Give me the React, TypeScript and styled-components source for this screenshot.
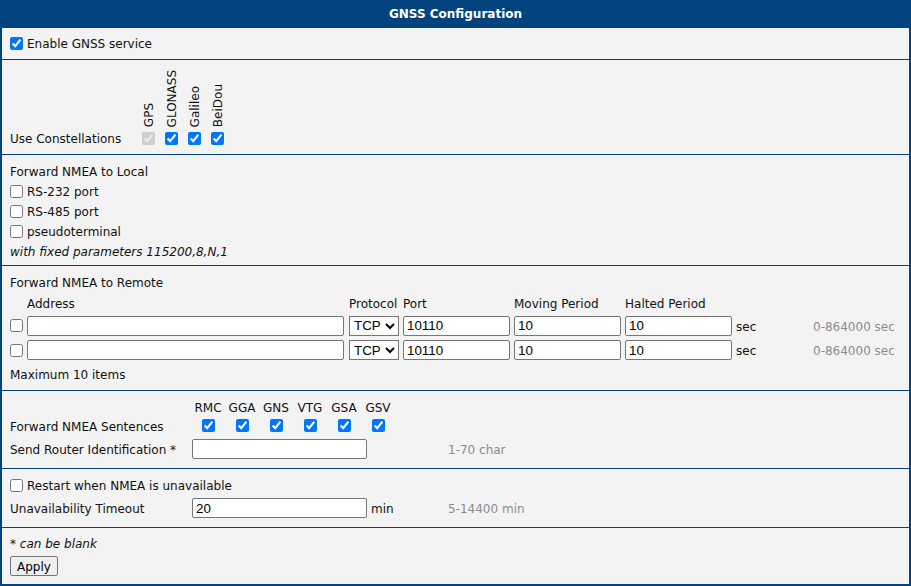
import React from "react";
import styled, { createGlobalStyle } from "styled-components";

const NAVY = "#01437c";
const HINT = "#8c8c8c";

const GlobalStyle = createGlobalStyle`
  html, body {
    margin: 0;
    padding: 0;
    background: #f3f3f3;
  }
  body {
    font-family: "DejaVu Sans", Verdana, sans-serif;
    font-size: 12px;
    color: #111;
  }
`;

const Panel = styled.div`
  width: 911px;
  box-sizing: border-box;
  border: 2px solid ${NAVY};
  border-top: 0;
  background: #f3f3f3;
`;

const Title = styled.div`
  height: 28px;
  line-height: 29px;
  margin: 0 -2px;
  background: ${NAVY};
  color: #fff;
  font-weight: bold;
  text-align: center;
`;

const Section = styled.div<{ $pt: number; $pb: number; $last?: boolean }>`
  padding: ${(p) => p.$pt}px 8px ${(p) => p.$pb}px;
  border-bottom: ${(p) => (p.$last ? "0" : `1px solid ${NAVY}`)};
  display: flex;
  flex-direction: column;
`;

const Line = styled.div<{ $h: number }>`
  height: ${(p) => p.$h}px;
  display: flex;
  align-items: center;
  white-space: nowrap;
`;

// the font sits a pixel high in its line box; this brings labels level with the controls
const Text = styled.span<{ $italic?: boolean; $muted?: boolean }>`
  padding-top: 2px;
  font-style: ${(p) => (p.$italic ? "italic" : "normal")};
  color: ${(p) => (p.$muted ? HINT : "inherit")};
`;

const Check = styled.input.attrs({ type: "checkbox" })<{ $gap?: number }>`
  width: 13px;
  height: 13px;
  margin: 0 ${(p) => p.$gap ?? 4}px 0 0;
  flex: none;
`;

const Note = styled.span`
  font-style: italic;
`;

/* constellations */
const ConstGrid = styled.div`
  display: grid;
  grid-template-columns: 127px repeat(4, 23px);
  grid-template-rows: 62px 20px;
  align-items: center;
`;

const VLabel = styled.span`
  writing-mode: vertical-rl;
  transform: rotate(180deg);
  justify-self: center;
  align-self: end;
  margin-bottom: 1px;
  padding-right: 1px;
  line-height: 13px;
`;

const Cell = styled.div`
  display: flex;
  justify-content: center;
  align-items: center;
`;

/* remote table */
const RemoteGrid = styled.div`
  display: grid;
  grid-template-columns: 17px 322px 54px 111px 111px 111px 77px 1fr;
  grid-template-rows: 21px 25px 24px;
  align-items: center;
  white-space: nowrap;
`;

const TextInput = styled.input<{ $w: number }>`
  box-sizing: border-box;
  width: ${(p) => p.$w}px;
  height: 20px;
  margin: 0;
  padding: 1px 3px;
  border: 1px solid #767676;
  border-radius: 2px;
  background: #fff;
  font-family: "Liberation Sans", Arial, sans-serif;
  font-size: 13.33px;
  color: #000;
`;

const Select = styled.select`
  box-sizing: border-box;
  width: 50px;
  height: 20px;
  margin: 0;
  font-family: "Liberation Sans", Arial, sans-serif;
  font-size: 13.33px;
  color: #000;
  border: 1px solid #767676;
  border-radius: 0;
  background: #fff;
`;

/* sentences */
const SentGrid = styled.div`
  display: grid;
  grid-template-columns: 181px repeat(6, 34px);
  grid-template-rows: 19px 19px;
  align-items: center;
`;

const FieldRow = styled.div<{ $h: number }>`
  display: grid;
  grid-template-columns: 182px 179px 77px 1fr;
  height: ${(p) => p.$h}px;
  align-items: center;
  white-space: nowrap;
`;

const Button = styled.button`
  box-sizing: border-box;
  width: 48px;
  height: 20px;
  margin: 0;
  padding: 1px 0 0;
  border: 1px solid #767676;
  border-radius: 2px;
  background: #efefef;
  font-family: "DejaVu Sans", Verdana, sans-serif;
  font-size: 12px;
  color: #000;
`;

const constellations = [
  { name: "GPS", checked: true, disabled: true },
  { name: "GLONASS", checked: true },
  { name: "Galileo", checked: true },
  { name: "BeiDou", checked: true },
];

const sentences = ["RMC", "GGA", "GNS", "VTG", "GSA", "GSV"];

const localPorts = ["RS-232 port", "RS-485 port", "pseudoterminal"];

const remotes = [
  { port: "10110", moving: "10", halted: "10" },
  { port: "10110", moving: "10", halted: "10" },
];

export default function App() {
  return (
    <>
      <GlobalStyle />
      <Panel>
        <Title>GNSS Configuration</Title>

        <Section $pt={5} $pb={6}>
          <Line $h={20}>
            <Check defaultChecked />
            <Text>Enable GNSS service</Text>
          </Line>
        </Section>

        <Section $pt={6} $pb={6}>
          <ConstGrid>
            <span />
            {constellations.map((c) => (
              <VLabel key={c.name}>{c.name}</VLabel>
            ))}
            <Text>Use Constellations</Text>
            {constellations.map((c) => (
              <Cell key={c.name}>
                <Check $gap={0} defaultChecked={c.checked} disabled={c.disabled} />
              </Cell>
            ))}
          </ConstGrid>
        </Section>

        <Section $pt={6} $pb={4}>
          <Line $h={20}>
            <Text>Forward NMEA to Local</Text>
          </Line>
          {localPorts.map((p) => (
            <Line $h={20} key={p}>
              <Check />
              <Text>{p}</Text>
            </Line>
          ))}
          <Line $h={20}>
            <Text $italic>with fixed parameters 115200,8,N,1</Text>
          </Line>
        </Section>

        <Section $pt={6} $pb={6}>
          <Line $h={20}>
            <Text>Forward NMEA to Remote</Text>
          </Line>
          <RemoteGrid>
            <span />
            <Text>Address</Text>
            <Text>Protocol</Text>
            <Text>Port</Text>
            <Text>Moving Period</Text>
            <Text>Halted Period</Text>
            <span />
            <span />
            {remotes.map((r, i) => (
              <React.Fragment key={i}>
                <Check />
                <TextInput $w={317} defaultValue="" />
                <Select defaultValue="TCP">
                  <option>TCP</option>
                  <option>UDP</option>
                </Select>
                <TextInput $w={107} defaultValue={r.port} />
                <TextInput $w={107} defaultValue={r.moving} />
                <TextInput $w={107} defaultValue={r.halted} />
                <Text>sec</Text>
                <Text $muted>0-864000 sec</Text>
              </React.Fragment>
            ))}
          </RemoteGrid>
          <Line $h={20} style={{ marginTop: 2 }}>
            <Text>Maximum 10 items</Text>
          </Line>
        </Section>

        <Section $pt={6} $pb={5}>
          <SentGrid>
            <span />
            {sentences.map((s) => (
              <Cell key={s}>
                <Text>{s}</Text>
              </Cell>
            ))}
            <Text>Forward NMEA Sentences</Text>
            {sentences.map((s) => (
              <Cell key={s}>
                <Check $gap={0} defaultChecked />
              </Cell>
            ))}
          </SentGrid>
          <FieldRow $h={28}>
            <Text>Send Router Identification *</Text>
            <TextInput $w={175} defaultValue="" />
            <span />
            <Text $muted>1-70 char</Text>
          </FieldRow>
        </Section>

        <Section $pt={6} $pb={6}>
          <Line $h={20}>
            <Check />
            <Text>Restart when NMEA is unavailable</Text>
          </Line>
          <FieldRow $h={26}>
            <Text>Unavailability Timeout</Text>
            <TextInput $w={175} defaultValue="20" />
            <Text>min</Text>
            <Text $muted>5-14400 min</Text>
          </FieldRow>
        </Section>

        <Section $pt={5} $pb={8} $last>
          <Line $h={20}>
            <Text>
              * <Note>can be blank</Note>
            </Text>
          </Line>
          <Line $h={20} style={{ marginTop: 3 }}>
            <Button>Apply</Button>
          </Line>
        </Section>
      </Panel>
    </>
  );
}
